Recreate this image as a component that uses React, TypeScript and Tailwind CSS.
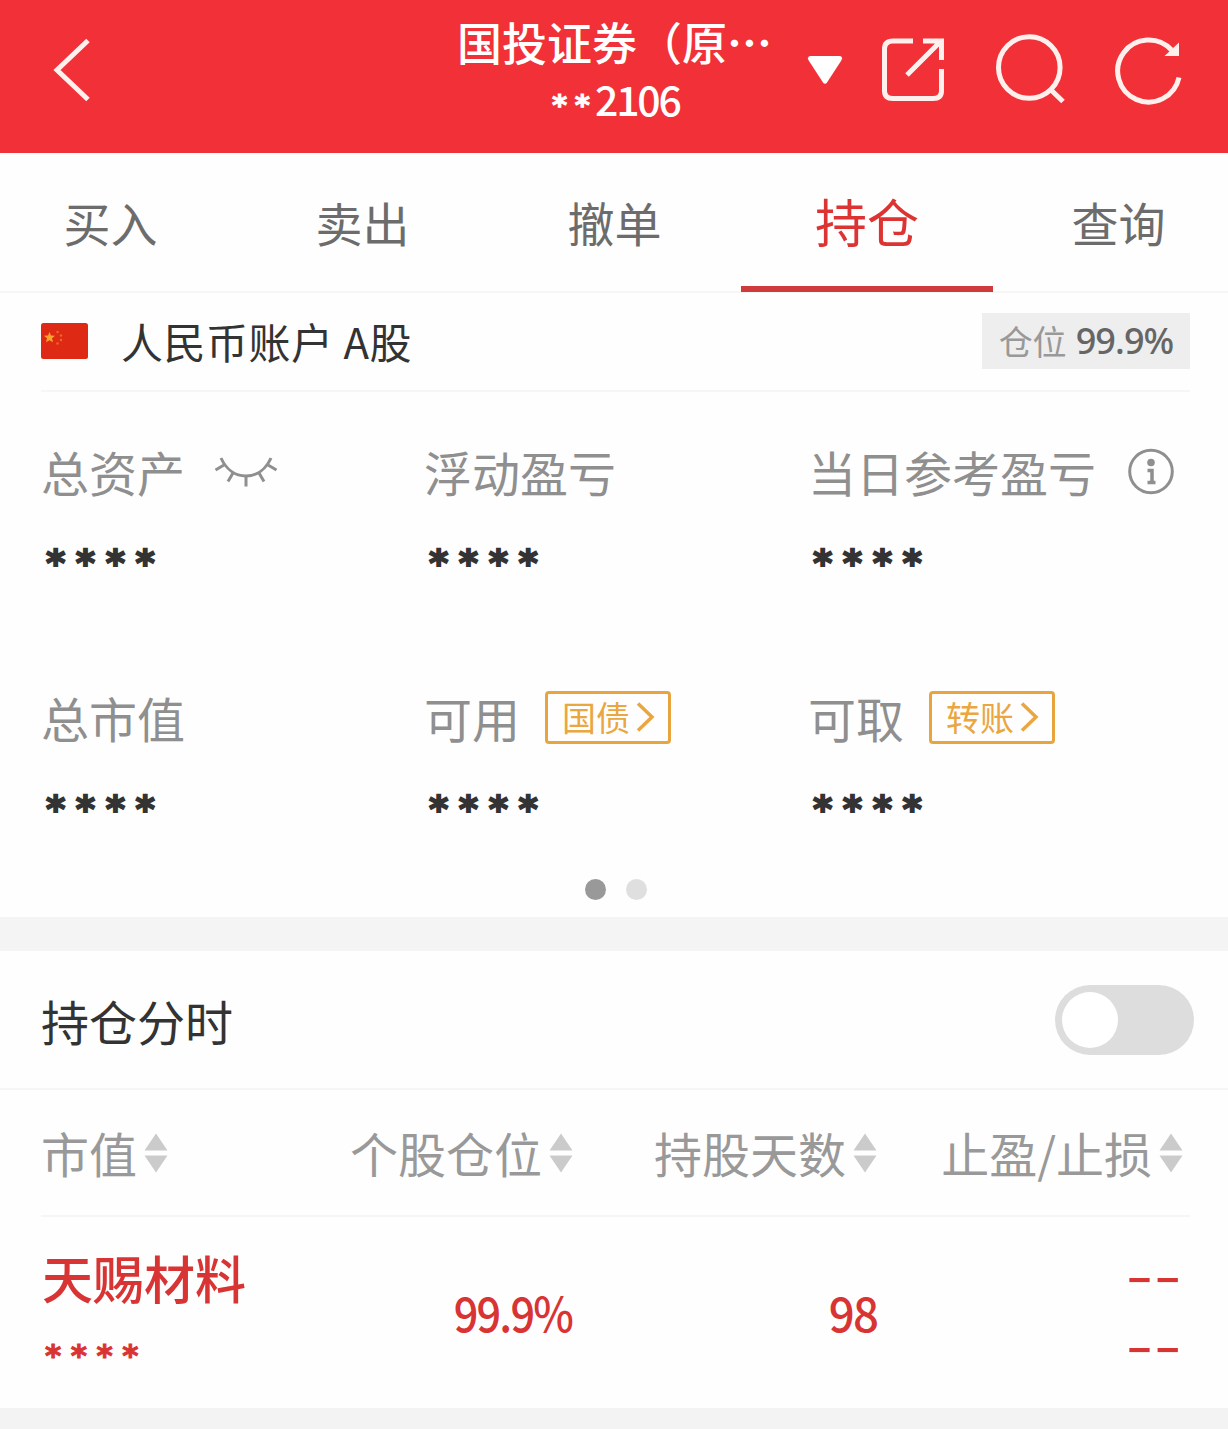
import React, { useState } from "react";

const TABS = ["买入", "卖出", "撤单", "持仓", "查询"];

type Asset = {
  label: string;
  icon?: React.ReactNode;
  action?: string;
};

const ClosedEyeIcon = () => (
  <svg className="ml-[29px] h-[34px] w-[64px]" viewBox="0 0 64 34" fill="none" stroke="#8f8f8f" strokeWidth="3">
    <path d="M7 4C12 15 21 22 32 22S52 15 57 4" />
    <path d="M10 11L1.500 16M19 19l-5 8.500M32 22v10.500M45 19l5 8.500M54 11l8.500 5" />
  </svg>
);

const InfoIcon = () => (
  <svg className="ml-[31px] h-[48px] w-[48px]" viewBox="0 0 48 48" fill="none" stroke="#8f8f8f">
    <circle cx="24" cy="24.500" r="21.300" strokeWidth="3" />
    <circle cx="24" cy="15.500" r="3.800" fill="#8f8f8f" stroke="none" />
    <path d="M20.500 23.500H25V35M20.500 35.500h8" strokeWidth="3.500" />
  </svg>
);

const ASSETS: Asset[] = [
  { label: "总资产", icon: <ClosedEyeIcon /> },
  { label: "浮动盈亏" },
  { label: "当日参考盈亏", icon: <InfoIcon /> },
  { label: "总市值" },
  { label: "可用", action: "国债" },
  { label: "可取", action: "转账" },
];

const SortIcon = () => (
  <svg className="ml-[7px] h-[40px] w-[24px] shrink-0" viewBox="0 0 24 40" fill="#cbcbcb">
    <path d="M12 .500L23.500 17.500H.500zM12 39.500L.500 22.500H23.500z" />
  </svg>
);

const SortHeader = ({ label }: { label: string }) => (
  <button className="flex items-center justify-end">
    <span className="-mt-[2px] text-[48px] leading-[60px] whitespace-nowrap">{label}</span>
    <SortIcon />
  </button>
);

const Header = () => (
  <header className="flex h-[153px] bg-[#f23037] text-white">
    <button className="mt-[36px] ml-[50px] h-[68px] w-[44px]" aria-label="返回">
      <svg className="h-[68px] w-[44px]" viewBox="0 0 44 68" fill="none" stroke="#fff0ee" strokeWidth="5">
        <path d="M38 4.500L7 34L38 63.500" />
      </svg>
    </button>
    <div className="ml-[363px] w-[319px] pt-[16px]">
      <div className="text-[45px] leading-[52px] font-medium whitespace-nowrap">国投证券（原<span className="font-bold">⋯</span></div>
      <div className="mt-[8px] flex h-[44px] items-start text-[41px] leading-[44px] font-medium">
        <span className="ml-[95px] w-[43px] pt-[7px] font-['DejaVu_Sans'] text-[29px] font-bold tracking-[7.500px] [-webkit-text-stroke:1px_white]">**</span>
        <span className="tracking-[-2.200px]">2106</span>
      </div>
    </div>
    <svg className="mt-[55px] ml-[31px] h-[31px] w-[36px]" viewBox="0 0 36 31" fill="white">
      <path d="M3 1H33Q36.500 2 34 6L20 27.500Q18 30 16 27.500L2 6Q-.500 2 3 1Z" />
    </svg>
    <svg className="mt-[35px] ml-[36px] h-[70px] w-[70px]" viewBox="0 0 70 70" fill="none" stroke="#fff0ee" strokeWidth="5">
      <path d="M34 6H14Q5.500 6 5.500 14V56Q5.500 63.500 14 63.500H54Q62.500 63.500 62.500 56V34" />
      <path d="M44 6H62.500V25M61 7L28 40" />
    </svg>
    <svg className="mt-[33px] ml-[43px] h-[74px] w-[74px]" viewBox="0 0 74 74" fill="none" stroke="#fff0ee" strokeWidth="5">
      <circle cx="37.300" cy="34.500" r="30.800" />
      <path d="M59 57L71 68.500" />
    </svg>
    <svg className="mt-[33px] ml-[44px] h-[74px] w-[74px]" viewBox="0 0 74 74" fill="none" stroke="#fff0ee" strokeWidth="5">
      <path d="M69 44.500A31 31 0 1 1 61.500 17" />
      <path d="M69 9.500V23H54.500z" fill="#fff0ee" stroke="none" />
    </svg>
  </header>
);

const App: React.FC = () => {
  const [activeTab, setActiveTab] = useState("持仓");
  const [showChart, setShowChart] = useState(false);

  return (
    <div className="h-[1429px] w-[1228px] overflow-hidden bg-[#fefefe] font-['Noto_Sans_CJK_SC',sans-serif] text-[#333]">
      <Header />

      <nav className="flex h-[140px] border-b-2 border-[#f6f6f6]">
        <div className="-mx-[15px] flex h-[139px] w-[1260px] shrink-0">
          {TABS.map((tab) => (
            <button
              key={tab}
              onClick={() => setActiveTab(tab)}
              className={
                tab === activeTab
                  ? "h-[139px] w-[252px] border-b-6 border-[#cf3a3c] pt-[3px] text-[52px] leading-[60px] text-[#dc3433]"
                  : "h-[139px] w-[252px] pr-[1px] pb-[2px] text-[47px] leading-[60px] text-[#6c6c6c]"
              }
            >
              {tab}
            </button>
          ))}
        </div>
      </nav>

      <section className="px-[41px]">
        <div className="flex h-[99px] w-[1149px] items-center border-b-2 border-[#f6f6f6]">
          <svg className="-mt-px h-[36px] w-[47px]" viewBox="0 0 47 36">
            <rect width="47" height="36" rx="2.500" fill="#de2a14" />
            <path d="M8.500 9l1.500 3.500 4 .200-3 2.500 1 4-3.500-2-3.500 2 1-4-3-2.500 4-.200z" fill="#f9a52c" />
            <g fill="#ed6a25">
              <circle cx="16.500" cy="9" r="1.200" />
              <circle cx="20" cy="12.500" r="1.200" />
              <circle cx="20" cy="17" r="1.200" />
              <circle cx="16.500" cy="20.500" r="1.200" />
            </g>
          </svg>
          <h2 className="ml-[33px] pb-[2px] text-[42px] leading-[56px] tracking-[0.500px]">人民币账户 A股</h2>
          <div className="-mt-px ml-auto flex h-[56px] w-[208px] items-center justify-center bg-[#eeeeee] pb-[1px] text-[34px] leading-[50px] whitespace-nowrap text-[#999]">
            仓位
            <span className="mt-[1px] ml-[9px] font-['Noto_Sans'] text-[36px] font-medium tracking-[-0.900px] text-[#666]">99.9%</span>
          </div>
        </div>

        <div className="grid grid-cols-[383px_384px_400px] pt-[49px]">
          {ASSETS.map((asset) => (
            <div key={asset.label} className="h-[246px]">
              <div className="flex h-[60px] items-center text-[48px] leading-[60px] whitespace-nowrap text-[#8f8f8f]">
                <span className="-mt-[1px]">{asset.label}</span>
                {asset.icon}
                {asset.action && (
                  <button className="ml-[25px] flex h-[53px] w-[126px] items-center justify-center rounded-[4px] border-3 border-[#e8a53f] text-[34px] leading-[46px] text-[#eaa640]">
                    <span className="-mt-[1px] ml-[1px]">{asset.action}</span>
                    <svg className="ml-[6px] h-[32px] w-[19px]" viewBox="0 0 19 32" fill="none" stroke="currentColor" strokeWidth="3.500">
                      <path d="M2 2.500L16 16L2 29.500" />
                    </svg>
                  </button>
                )}
              </div>
              <div className="mt-[33px] ml-[5px] font-['DejaVu_Sans'] text-[37px] leading-[60px] font-bold tracking-[10.500px] [-webkit-text-stroke:1.800px_#333]">****</div>
            </div>
          ))}
        </div>
      </section>

      <div className="-mt-[54px] flex justify-center gap-[20px] pl-[3px]">
        <span className="h-[21px] w-[21px] rounded-full bg-[#999]" />
        <span className="h-[21px] w-[21px] rounded-full bg-[#dfdfdf]" />
      </div>
      <div className="mt-[17px] h-[34px] bg-[#f4f4f4]" />

      <section className="flex h-[139px] items-center justify-between border-b-2 border-[#f6f6f6] pr-[34px] pl-[41px]">
        <h3 className="mt-px text-[48px] leading-[60px]">持仓分时</h3>
        <button
          role="switch"
          aria-checked={showChart}
          aria-label="持仓分时"
          onClick={() => setShowChart(!showChart)}
          className="flex h-[70px] w-[139px] items-center rounded-full bg-[#dddddd] px-[7px]"
        >
          <span className={showChart ? "ml-auto h-[56px] w-[56px] rounded-full bg-white" : "h-[56px] w-[56px] rounded-full bg-white"} />
        </button>
      </section>

      <section className="mx-[41px] w-[1149px]">
        <div className="grid h-[127px] grid-cols-[127px_405px_304px_306px] items-center border-b-2 border-[#f6f6f6] text-[#999]">
          <SortHeader label="市值" />
          <SortHeader label="个股仓位" />
          <SortHeader label="持股天数" />
          <SortHeader label="止盈/止损" />
        </div>
        <div className="flex h-[191px] text-[#d93434]">
          <div className="w-[250px] pt-[30px]">
            <div className="ml-[1px] text-[51px] leading-[60px] font-medium">天赐材料</div>
            <div className="mt-[18px] ml-[4px] font-['DejaVu_Sans'] text-[31px] leading-[60px] font-bold tracking-[9.500px] [-webkit-text-stroke:1px_#d93434]">****</div>
          </div>
          <div className="w-[281px] origin-right scale-x-90 pt-[64px] text-right text-[48px] leading-[60px] font-medium tracking-[-2px]">99.9%</div>
          <div className="w-[305px] origin-right scale-x-95 pt-[64px] text-right text-[48px] leading-[60px] font-medium tracking-[-2px]">98</div>
          <div className="ml-auto flex origin-right scale-x-160 flex-col gap-[10px] pt-[26px] pr-[5px] text-[48px] leading-[60px] font-medium tracking-[0.500px]">
            <span>--</span>
            <span>--</span>
          </div>
        </div>
      </section>
      <div className="h-[21px] bg-[#f3f3f3]" />
    </div>
  );
};

export default App;
